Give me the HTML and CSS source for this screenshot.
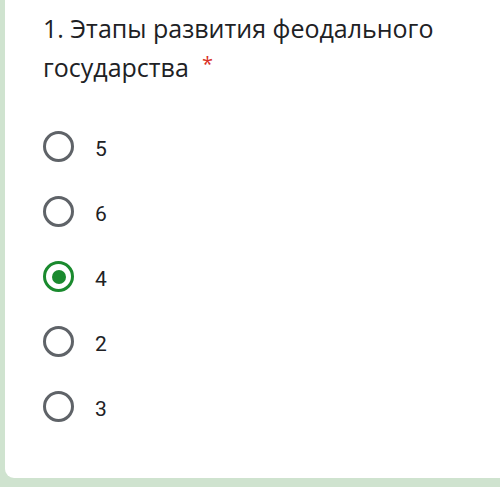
FILE: index.html
```html
<!DOCTYPE html>
<html lang="ru">
<head>
<meta charset="utf-8">
<link rel="stylesheet" href="styles.css">
</head>
<body>
<div class="card">
  <div class="title">1. Этапы развития феодального государства<span class="req">*</span></div>
  <div class="options">
    <div class="opt"><span class="radio"></span><span class="label">5</span></div>
    <div class="opt"><span class="radio"></span><span class="label">6</span></div>
    <div class="opt"><span class="radio checked"></span><span class="label">4</span></div>
    <div class="opt"><span class="radio"></span><span class="label">2</span></div>
    <div class="opt"><span class="radio"></span><span class="label">3</span></div>
  </div>
</div>
</body>
</html>
```
FILE: styles.css
```css
html, body {
  margin: 0;
  padding: 0;
}
body {
  background: #cfe3cf;
  width: 500px;
  height: 487px;
  overflow: hidden;
  font-family: Roboto, "Noto Sans", sans-serif;
  color: #202124;
}
.card {
  margin-left: 5px;
  height: 478px;
  background: #fff;
  border-bottom-left-radius: 9px;
  box-sizing: border-box;
  padding: 9px 0 0 38px;
}
.title {
  font-family: "Open Sans", Roboto, sans-serif;
  font-size: 25px;
  line-height: 39px;
  width: 440px;
}
.req {
  color: #d93025;
  font-size: 20px;
  line-height: 1;
  margin-left: 13px;
  vertical-align: 6px;
}
.options {
  margin-top: 27px;
  display: flex;
  flex-direction: column;
}
.opt {
  height: 65px;
  display: flex;
  align-items: center;
}
.radio {
  box-sizing: border-box;
  width: 31px;
  height: 31px;
  border: 3px solid #5f6368;
  border-radius: 50%;
  display: flex;
  align-items: center;
  justify-content: center;
  flex: none;
}
.radio.checked {
  border-color: #1a8a2e;
}
.radio.checked::after {
  content: "";
  width: 14px;
  height: 14px;
  border-radius: 50%;
  background: #1a8a2e;
}
.label {
  margin-left: 21px;
  font-size: 21px;
  line-height: 24px;
  padding-top: 4px;
}
```
